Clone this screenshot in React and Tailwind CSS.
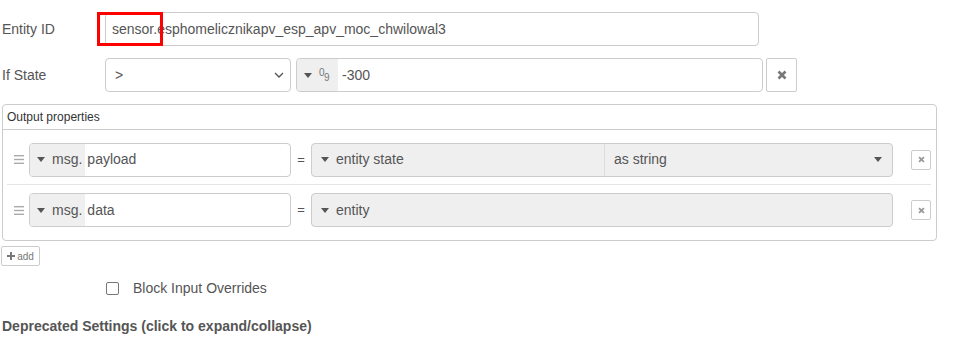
import React from 'react';

const Caret = () => (
    <svg width="8" height="5" viewBox="0 0 8 5" className="shrink-0">
        <path d="M0 0 L8 0 L4 5 Z" fill="#555" />
    </svg>
);

const Times = ({ size = 8, color = '#999' }) => (
    <svg width={size} height={size} viewBox="0 0 10 10">
        <path d="M1.5 1.5 L8.5 8.5 M8.5 1.5 L1.5 8.5" stroke={color} strokeWidth="2.6" strokeLinecap="butt" />
    </svg>
);

const Handle = () => (
    <svg width="10" height="9" viewBox="0 0 10 9">
        <rect x="0" y="0" width="10" height="1.4" fill="#aaa" />
        <rect x="0" y="3.8" width="10" height="1.4" fill="#aaa" />
        <rect x="0" y="7.6" width="10" height="1.4" fill="#aaa" />
    </svg>
);

const OutputRow = ({ prop, value, extra, last }) => (
    <div className={`flex items-center h-[50px] ml-[4px] mr-[5px] ${last ? '' : 'border-b border-[#e5e5e5]'}`}>
        <div className="w-[22px] flex justify-center pl-[1px]">
            <Handle />
        </div>
        {/* msg.prop typed input */}
        <div className="flex w-[262px] h-[34px] border border-[#ccc] rounded-[4px] overflow-hidden">
            <div className="flex items-center gap-[7px] pl-[7px] pr-[3px] bg-[#efefef] text-[#555]">
                <Caret />
                <span>msg.</span>
            </div>
            <div className="flex items-center pl-[2px] text-[#555]">{prop}</div>
        </div>
        <div className="w-[20px] text-center text-[#555] text-[13px]">=</div>
        <div className="flex w-[582px] h-[34px] border border-[#ccc] rounded-[4px] overflow-hidden bg-[#efefef]">
            <div className={`flex items-center gap-[7px] pl-[9px] ${extra ? 'w-[293px] border-r border-[#ddd]' : 'flex-1'}`}>
                <Caret />
                <span className="text-[#555]">{value}</span>
            </div>
            {extra && (
                <div className="flex-1 flex items-center justify-between pl-[9px] pr-[10px] text-[#555]">
                    <span>{extra}</span>
                    <Caret />
                </div>
            )}
        </div>
        <div className="ml-[18px] w-[20px] h-[20px] border border-[#ccc] rounded-[2px] flex items-center justify-center">
            <Times size={7} color="#999" />
        </div>
    </div>
);

export default function App() {
    return (
        <div
            className="bg-white w-[953px] h-[363px] overflow-hidden pt-[12px] text-[14px] text-[#555]"
            style={{ fontFamily: '"Liberation Sans", Arial, sans-serif' }}
        >
            {/* Entity ID */}
            <div className="flex items-center pl-[2px]">
                <div className="w-[103px]">Entity ID</div>
                <div className="relative">
                    <div className="w-[654px] h-[34px] border border-[#ccc] rounded-[4px] flex items-center pl-[6px]">
                        sensor.esphomelicznikapv_esp_apv_moc_chwilowal3
                    </div>
                    <div className="absolute left-[-8px] top-0 w-[66px] h-[34px] border-[3px] border-[#f00]" />
                </div>
            </div>

            {/* If State */}
            <div className="flex items-center pl-[2px] mt-[12px]">
                <div className="w-[103px]">If State</div>
                <div className="w-[186px] h-[34px] border border-[#ccc] rounded-[4px] flex items-center justify-between pl-[9px] pr-[6px]">
                    <span>&gt;</span>
                    <svg width="10" height="6" viewBox="0 0 10 6">
                        <path d="M1 1 L5 5 L9 1" stroke="#555" strokeWidth="1.3" fill="none" />
                    </svg>
                </div>
                <div className="ml-[5px] w-[467px] h-[34px] border border-[#ccc] rounded-[4px] overflow-hidden flex">
                    <div className="w-[41px] bg-[#efefef] flex items-center pl-[7px] gap-[7px]">
                        <Caret />
                        <span className="relative text-[10px] leading-none text-[#777] w-[10px] h-[16px]">
                            <span className="absolute left-0 top-[1px]">0</span>
                            <span className="absolute left-[5px] top-[6px]">9</span>
                        </span>
                    </div>
                    <div className="flex items-center pl-[4px]">-300</div>
                </div>
                <div className="ml-[3px] w-[31px] h-[34px] border border-[#ccc] rounded-[2px] flex items-center justify-center">
                    <Times size={10} color="#777" />
                </div>
            </div>

            {/* Output properties */}
            <div className="mt-[12px] ml-[2px] w-[935px] border border-[#ccc] rounded-[4px]">
                <div className="h-[25px] flex items-center pl-[4px] text-[12px] text-[#333] border-b border-[#ccc]">
                    Output properties
                </div>
                <div className="py-[5px]">
                    <OutputRow prop="payload" value="entity state" extra="as string" />
                    <OutputRow prop="data" value="entity" last />
                </div>
            </div>

            {/* add */}
            <div className="mt-[5px] ml-[1px] w-[39px] h-[20px] border border-[#ccc] rounded-[2px] flex items-center justify-center gap-[2px] text-[10px] text-[#777]">
                <svg width="8" height="8" viewBox="0 0 8 8">
                    <path d="M4 0 V8 M0 4 H8" stroke="#777" strokeWidth="2" />
                </svg>
                <span>add</span>
            </div>

            {/* Block Input Overrides */}
            <div className="mt-[12px] flex items-center">
                <div className="ml-[106px] w-[13px] h-[13px] border border-[#767676] rounded-[2px]" />
                <span className="ml-[14px]">Block Input Overrides</span>
            </div>

            {/* Deprecated */}
            <div className="mt-[17px] pl-[2px] font-bold">Deprecated Settings (click to expand/collapse)</div>
        </div>
    );
}
